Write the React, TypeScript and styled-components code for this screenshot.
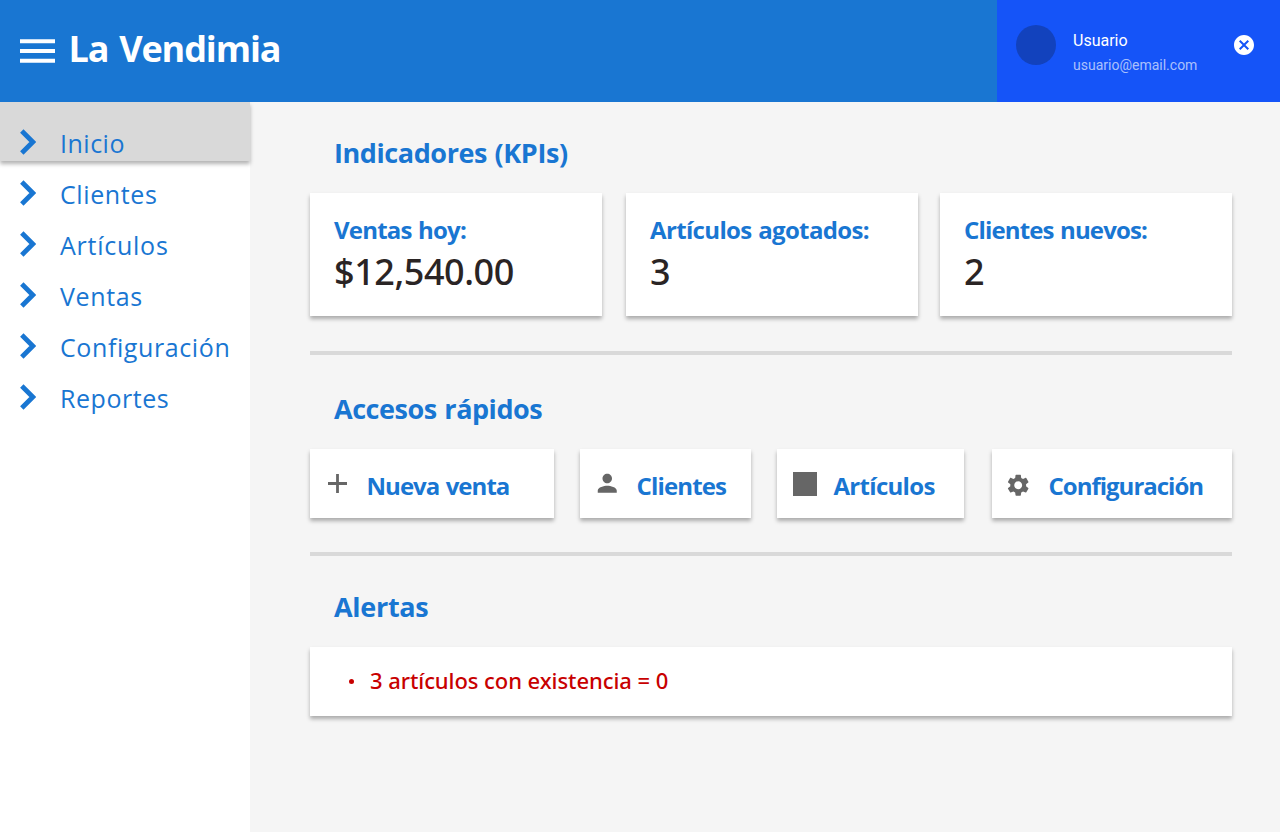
import React from 'react';
import styled, { createGlobalStyle } from 'styled-components';
import { MdCancel, MdPerson, MdSettings } from 'react-icons/md';

const GlobalStyle = createGlobalStyle`
  * { box-sizing: border-box; }
  body { margin: 0; background: #f5f5f5; font-family: 'Open Sans', 'Noto Sans', sans-serif; }
  h1, h2, h3, p, ul { margin: 0; padding: 0; font-weight: inherit; }
  ul { list-style: none; }
`;

const BLUE = '#1976d2';
const SHADOW = '0 3px 4px rgba(0, 0, 0, 0.3)';

const Page = styled.div`
  width: 1280px;
  height: 832px;
  display: flex;
  flex-direction: column;
  overflow: hidden;
`;

const Header = styled.header`
  flex: none;
  display: flex;
  height: 102px;
  background: ${BLUE};
  position: relative;
  z-index: 2;
`;

const Brand = styled.div`
  flex: 1;
  display: flex;
  align-items: flex-start;
  padding: 25px 0 0 20px;
`;

const MenuIcon = styled.svg`
  width: 35px;
  height: 24px;
  margin-top: 14px;
  fill: #fff;
`;

const Title = styled.h1`
  margin-left: 13.5px;
  font-size: 36px;
  font-weight: 700;
  line-height: 48px;
  letter-spacing: -1.1px;
  word-spacing: 2.5px;
  color: #fff;
`;

const UserPanel = styled.div`
  width: 283px;
  display: flex;
  align-items: flex-start;
  padding: 25px 24px 0 19px;
  background: #1554f8;
  color: #fff;
  font-family: Roboto, sans-serif;
`;

const Avatar = styled.div`
  width: 40px;
  height: 40px;
  border-radius: 50%;
  background: #1242bd;
`;

const UserInfo = styled.div`
  flex: 1;
  margin: 4px 0 0 17px;
`;

const UserName = styled.p`
  font-size: 16px;
  line-height: 24px;
`;

const UserEmail = styled.p`
  margin-top: 2px;
  font-size: 14px;
  line-height: 20px;
  color: rgba(255, 255, 255, 0.65);
`;

const CloseButton = styled.button`
  display: flex;
  margin: 8px 0 0;
  padding: 0;
  border: 0;
  background: none;
  color: #fff;
`;

const Body = styled.div`
  flex: 1;
  display: flex;
`;

const Sidebar = styled.nav`
  flex: none;
  width: 250px;
  background: #fff;
`;

const NavItem = styled.li<{ $active?: boolean }>`
  display: flex;
  align-items: flex-end;
  height: ${p => (p.$active ? 59 : 51)}px;
  padding-left: 20px;
  background: ${p => (p.$active ? '#d9d9d9' : 'transparent')};
  box-shadow: ${p => (p.$active ? SHADOW : 'none')};
`;

const Chevron = styled.svg`
  width: 16px;
  height: 26px;
  margin: 0 24px 6px 0;
  fill: none;
  stroke: ${BLUE};
  stroke-width: 4.8;
`;

const NavLabel = styled.span<{ $spacing: number }>`
  font-size: 25px;
  font-weight: 400;
  line-height: 35px;
  letter-spacing: ${p => p.$spacing}px;
  color: ${BLUE};
`;

const Main = styled.main`
  flex: 1;
  padding: 33px 48px 0 60px;
`;

const SectionTitle = styled.h2<{ $spacing: number }>`
  margin: 0 0 22px 24px;
  font-size: 27px;
  font-weight: 700;
  line-height: 36px;
  letter-spacing: ${p => p.$spacing}px;
  word-spacing: 1px;
  color: ${BLUE};
`;

const Divider = styled.hr<{ $before: number; $after: number }>`
  height: 4px;
  margin: ${p => p.$before}px 0 ${p => p.$after}px;
  border: 0;
  background: #d9d9d9;
`;

const CardRow = styled.div`
  display: flex;
  justify-content: space-between;
`;

const Card = styled.div`
  background: #fff;
  box-shadow: ${SHADOW};
`;

const KpiCard = styled(Card)`
  width: 292px;
  height: 123px;
  padding: 21px 0 0 24px;
  &:nth-child(2) { margin-left: 2px; }
`;

const CardLabel = styled.h3<{ $spacing: number }>`
  font-size: 24px;
  font-weight: 700;
  line-height: 32px;
  letter-spacing: ${p => p.$spacing}px;
  word-spacing: 1px;
  white-space: nowrap;
  color: ${BLUE};
`;

const KpiValue = styled.p`
  margin-top: 4px;
  font-family: 'Noto Sans', sans-serif;
  font-size: 36px;
  font-weight: 460;
  line-height: 44px;
  letter-spacing: -0.45px;
  color: #2a2424;
`;

const QuickCard = styled(Card)<{ $width: number }>`
  display: flex;
  width: ${p => p.$width}px;
  height: 69px;
  padding-top: 21px;
  &:last-child { margin-left: 2px; }
`;

const IconSlot = styled.span<{ $top: number; $center: number }>`
  flex: none;
  display: flex;
  justify-content: center;
  width: ${p => p.$center * 2}px;
  height: 30px;
  margin: ${p => p.$top}px ${p => 56.5 - p.$center * 2}px 0 0;
  color: #666;
`;

const Plus = styled.svg`
  width: 19px;
  height: 19px;
  fill: none;
  stroke: #666;
  stroke-width: 2.8;
`;

const Square = styled.span`
  width: 24px;
  height: 24px;
  background: #666;
`;

const AlertCard = styled(Card)`
  height: 69px;
  padding: 18px 0 0 39px;
`;

const AlertItem = styled.li`
  display: flex;
  align-items: center;
  font-family: 'Noto Sans', sans-serif;
  font-size: 22px;
  font-weight: 480;
  line-height: 30px;
  letter-spacing: -0.07px;
  color: #c80000;
  &::before {
    content: '';
    width: 5px;
    height: 5px;
    margin: 3px 16px 0 0;
    border-radius: 50%;
    background: currentColor;
  }
`;

const navItems = [
  { label: 'Inicio', spacing: 0.5, active: true },
  { label: 'Clientes', spacing: 0.6 },
  { label: 'Artículos', spacing: 0.75 },
  { label: 'Ventas', spacing: 0.65 },
  { label: 'Configuración', spacing: 0.6 },
  { label: 'Reportes', spacing: 0.55 },
];

const kpis = [
  { label: 'Ventas hoy:', value: '$12,540.00', spacing: -0.8 },
  { label: 'Artículos agotados:', value: '3', spacing: -0.65 },
  { label: 'Clientes nuevos:', value: '2', spacing: -0.85 },
];

const shortcuts = [
  {
    label: 'Nueva venta', width: 244, spacing: -0.95, top: 4, center: 27.5,
    icon: <Plus viewBox="0 0 19 19"><path d="M9.5 0v19M0 9.5h19" /></Plus>,
  },
  { label: 'Clientes', width: 171, spacing: -0.85, top: -1, center: 27.5, icon: <MdPerson size={28.5} /> },
  { label: 'Artículos', width: 187, spacing: -0.7, top: 2, center: 28, icon: <Square /> },
  { label: 'Configuración', width: 240, spacing: -1, top: 2, center: 26.5, icon: <MdSettings size={26.4} /> },
];

export default function App() {
  return (
    <Page>
      <GlobalStyle />
      <Header>
        <Brand>
          <MenuIcon viewBox="0 0 35 24">
            <path d="M0 .3h35v4H0zM0 10h35v4H0zM0 19.7h35v4H0z" />
          </MenuIcon>
          <Title>La Vendimia</Title>
        </Brand>
        <UserPanel>
          <Avatar />
          <UserInfo>
            <UserName>Usuario</UserName>
            <UserEmail>usuario@email.com</UserEmail>
          </UserInfo>
          <CloseButton aria-label="Cerrar sesión"><MdCancel size={24} /></CloseButton>
        </UserPanel>
      </Header>
      <Body>
        <Sidebar>
          <ul>
            {navItems.map(item => (
              <NavItem key={item.label} $active={item.active}>
                <Chevron viewBox="0 0 16 26"><path d="M1.8 2 12.8 13 1.8 24" /></Chevron>
                <NavLabel $spacing={item.spacing}>{item.label}</NavLabel>
              </NavItem>
            ))}
          </ul>
        </Sidebar>
        <Main>
          <SectionTitle $spacing={-0.42}>Indicadores (KPIs)</SectionTitle>
          <CardRow>
            {kpis.map(kpi => (
              <KpiCard key={kpi.label}>
                <CardLabel $spacing={kpi.spacing}>{kpi.label}</CardLabel>
                <KpiValue>{kpi.value}</KpiValue>
              </KpiCard>
            ))}
          </CardRow>
          <Divider $before={35} $after={36} />
          <SectionTitle $spacing={-0.45}>Accesos rápidos</SectionTitle>
          <CardRow>
            {shortcuts.map(item => (
              <QuickCard key={item.label} $width={item.width}>
                <IconSlot $top={item.top} $center={item.center}>{item.icon}</IconSlot>
                <CardLabel $spacing={item.spacing}>{item.label}</CardLabel>
              </QuickCard>
            ))}
          </CardRow>
          <Divider $before={34} $after={33} />
          <SectionTitle $spacing={-0.3}>Alertas</SectionTitle>
          <AlertCard>
            <ul>
              <AlertItem>3 artículos con existencia = 0</AlertItem>
            </ul>
          </AlertCard>
        </Main>
      </Body>
    </Page>
  );
}
